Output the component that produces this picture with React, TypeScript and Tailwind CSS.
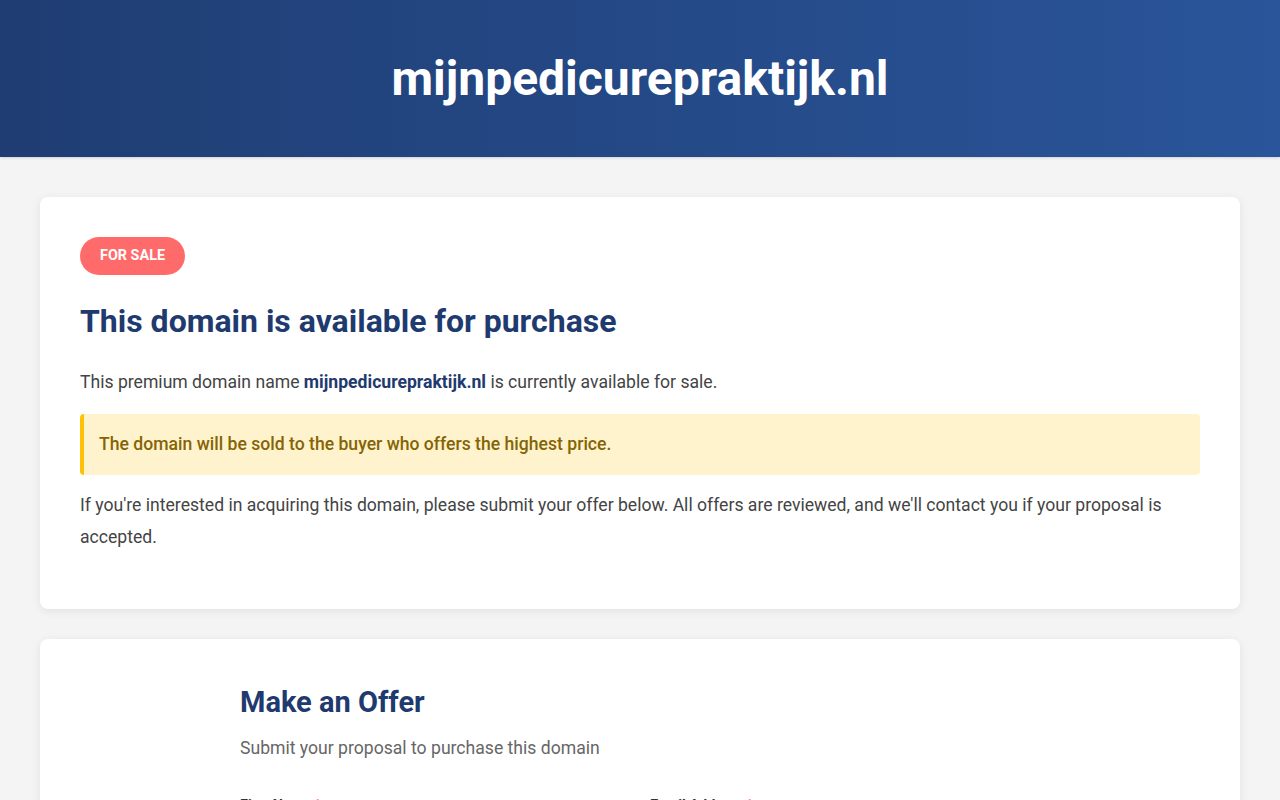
export default function App() {
  return (
    <div className="min-h-screen bg-[#f4f4f4] font-['Roboto',sans-serif] text-[#444]">
      <header className="bg-gradient-to-r from-[#1f3d73] to-[#2a559a] h-[157px] flex items-center justify-center shadow-sm">
        <h1 className="text-white text-[48px] font-bold leading-none">mijnpedicurepraktijk.nl</h1>
      </header>

      <main className="px-10 pt-10 pb-10 flex flex-col gap-[30px]">
        <section className="bg-white rounded-lg shadow-[0_2px_10px_rgba(0,0,0,0.08)] p-10">
          <span className="inline-flex items-center h-[38px] px-5 rounded-full bg-[#ff6b6b] text-white text-[14.4px] font-bold uppercase">
            For Sale
          </span>
          <h2 className="mt-[26px] text-[32px] font-bold text-[#1e3a6e] leading-tight">
            This domain is available for purchase
          </h2>
          <p className="mt-[31px] text-[17.6px] leading-[20px]">
            This premium domain name <strong className="font-bold text-[#1e3a6e]">mijnpedicurepraktijk.nl</strong> is currently available for sale.
          </p>
          <div className="mt-[22px] bg-[#fff3cd] border-l-4 border-[#ffc107] rounded-[4px] px-[15px] h-[61px] flex items-center">
            <p className="text-[17.6px] font-medium text-[#856404]">
              The domain will be sold to the buyer who offers the highest price.
            </p>
          </div>
          <p className="mt-[14px] mb-[16px] text-[17.6px] leading-[32px]">
            If you're interested in acquiring this domain, please submit your offer below. All offers are reviewed, and we'll contact you if your proposal is accepted.
          </p>
        </section>

        <section className="bg-white rounded-lg shadow-[0_2px_10px_rgba(0,0,0,0.08)] p-10">
          <div className="max-w-[800px] mx-auto">
            <h2 className="text-[29px] font-bold text-[#1e3a6e] leading-tight mt-[5px]">Make an Offer</h2>
            <p className="mt-[15px] text-[17.6px] text-[#666]">Submit your proposal to purchase this domain</p>
            <form className="mt-[33px] grid grid-cols-2 gap-5">
              <div className="flex flex-col gap-2">
                <label className="text-[14.4px] font-bold text-[#333]">
                  First Name <span className="text-[#ff6b6b]">*</span>
                </label>
                <input className="border border-[#ddd] rounded-md h-[44px] px-3" />
              </div>
              <div className="flex flex-col gap-2">
                <label className="text-[14.4px] font-bold text-[#333]">
                  Email Address <span className="text-[#ff6b6b]">*</span>
                </label>
                <input className="border border-[#ddd] rounded-md h-[44px] px-3" />
              </div>
            </form>
          </div>
        </section>
      </main>
    </div>
  )
}
